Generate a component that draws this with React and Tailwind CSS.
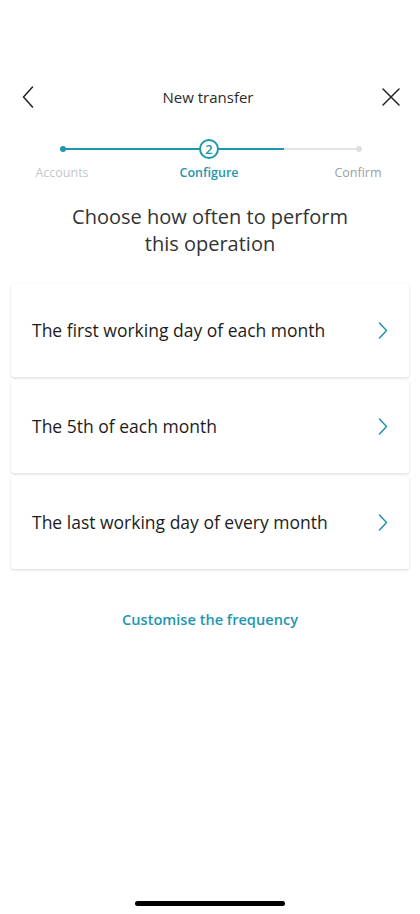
import React from "react";

const options = [
  "The first working day of each month",
  "The 5th of each month",
  "The last working day of every month",
];

const Chevron = () => (
  <svg width="10" height="17" viewBox="0 0 10 17" fill="none">
    <path d="M1.5 1 L8.5 8.5 L1.5 16" stroke="#1f8fa3" strokeWidth="1.4" strokeLinecap="round" strokeLinejoin="round" />
  </svg>
);

export default function App() {
  return (
    <div className="w-[420px] h-[914px] bg-white flex flex-col relative overflow-hidden" style={{ fontFamily: '"Open Sans", sans-serif' }}>
      {/* Header */}
      <div className="h-[40px] mt-[77px] flex items-center justify-between px-[22px]">
        <svg width="12" height="22" viewBox="0 0 12 22" fill="none">
          <path d="M10.5 1 L1.5 11 L10.5 21" stroke="#222" strokeWidth="1.5" strokeLinecap="round" strokeLinejoin="round" />
        </svg>
        <div className="text-[15px] text-[#2b2b2b]">New transfer</div>
        <svg width="18" height="18" viewBox="0 0 18 18" fill="none" className="mr-[-2px]">
          <path d="M1 1 L17 17 M17 1 L1 17" stroke="#222" strokeWidth="1.5" strokeLinecap="round" />
        </svg>
      </div>

      {/* Stepper */}
      <div className="mt-[21px] relative h-[20px] mx-[60px]">
        <div className="absolute left-[2px] top-[10px] w-[222px] h-[2px] bg-[#1d97ad]" />
        <div className="absolute left-[224px] top-[10px] w-[74px] h-[2px] bg-[#e4e4e4]" />
        <div className="absolute left-0 top-[8px] w-[6px] h-[6px] rounded-full bg-[#1d97ad]" />
        <div className="absolute left-[296px] top-[8px] w-[6px] h-[6px] rounded-full bg-[#e0e0e0]" />
        <div className="absolute left-[139px] top-[1px] w-[20px] h-[20px] rounded-full border-2 border-[#1d97ad] bg-white flex items-center justify-center text-[13px] font-semibold text-[#1d97ad] leading-none">2</div>
      </div>
      <div className="mt-[6px] flex justify-between pl-[34px] pr-[37px] text-[12.5px]">
        <span className="text-[#c4c7c9] w-[56px] text-center">Accounts</span>
        <span className="text-[#1d97ad] font-semibold mr-[5px]">Configure</span>
        <span className="text-[#9a9fa2] w-[50px] text-center">Confirm</span>
      </div>

      {/* Heading */}
      <div className="mt-[20px] text-center text-[20px] leading-[27px] text-[#333]">
        Choose how often to perform
        <br />
        this operation
      </div>

      {/* Options */}
      <div className="mt-[27px] px-[11px] flex flex-col gap-[3px]">
        {options.map((o) => (
          <div key={o} className="h-[93px] bg-white rounded-[3px] shadow-[0_1px_3px_rgba(0,0,0,0.16)] flex items-center justify-between pl-[21px] pr-[21px]">
            <span className="text-[17.5px] text-[#1c1c1c]">{o}</span>
            <Chevron />
          </div>
        ))}
      </div>

      <div className="mt-[40px] text-center text-[14.6px] font-semibold text-[#1d97ad]">Customise the frequency</div>

      <div className="absolute left-[135px] bottom-[8px] w-[150px] h-[5px] rounded-full bg-black" />
    </div>
  );
}
